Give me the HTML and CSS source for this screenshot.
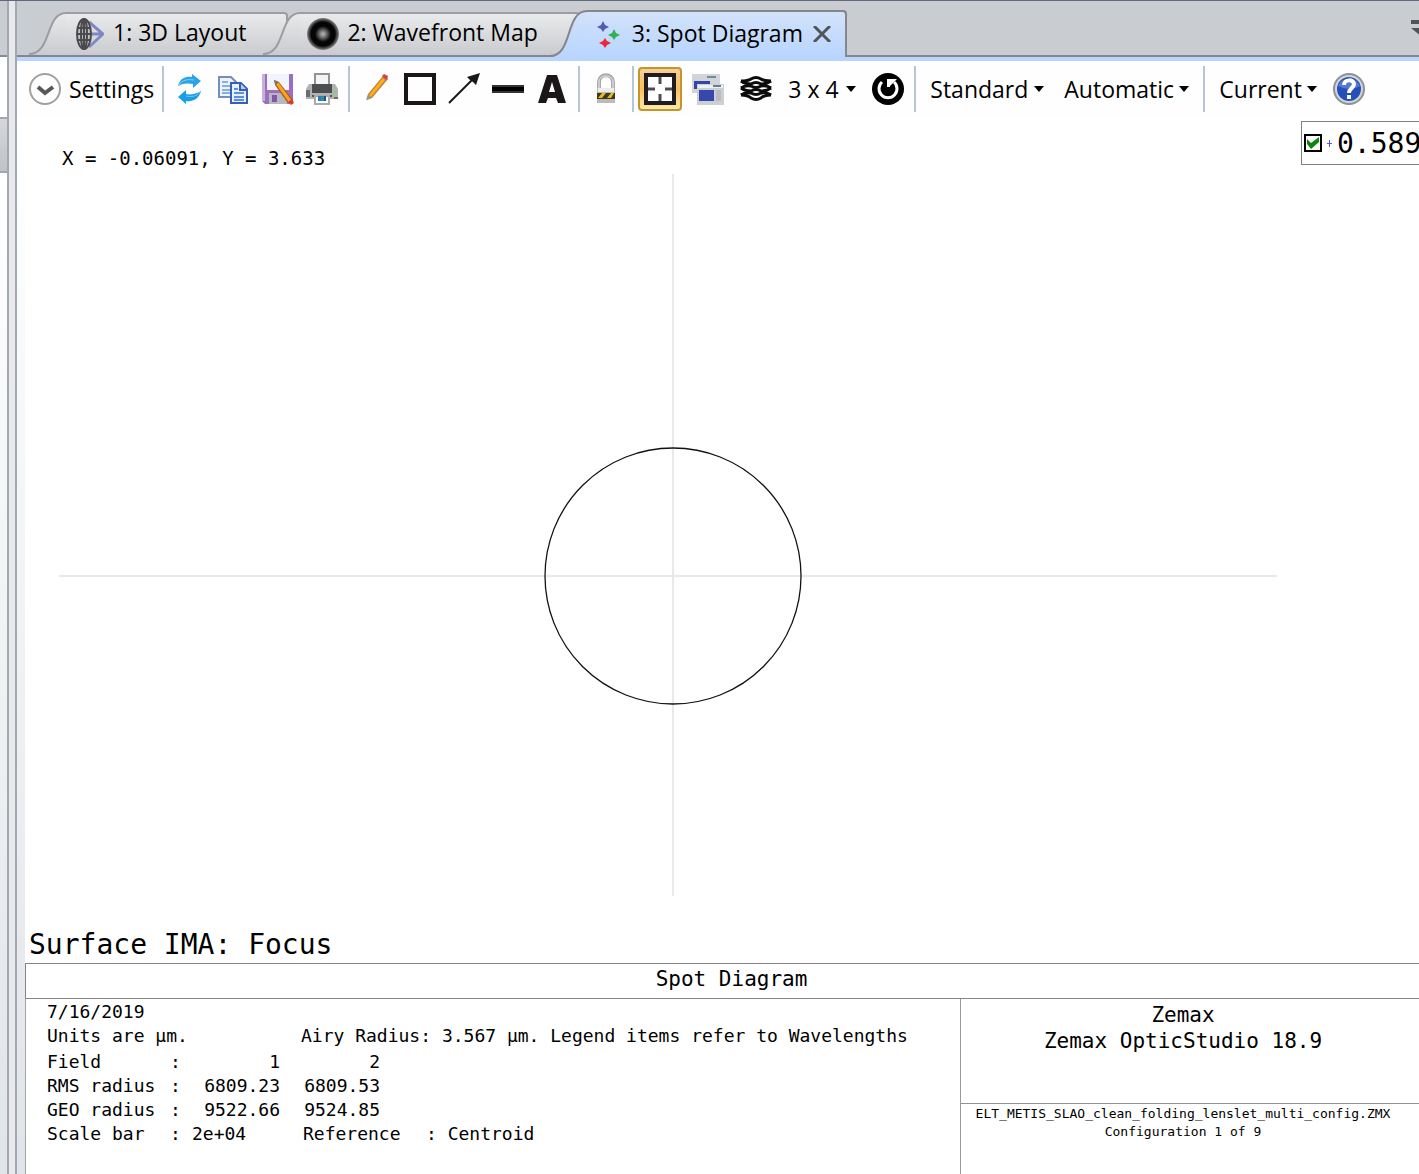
FILE: index.html
```html
<!DOCTYPE html>
<html lang="en">
<head>
<meta charset="utf-8">
<title>Spot Diagram</title>
<link rel="stylesheet" href="styles.css">
</head>
<body>
<div class="app">
  <aside class="dock">
    <div class="dock-head"></div>
    <div class="dock-gap"></div>
    <div class="dock-tab"></div>
    <div class="dock-fill"></div>
  </aside>
  <div class="splitter"></div>
  <main class="window">
    <nav class="tabs">
      <button class="tab" type="button">
        <svg class="slope" width="37" height="43" viewBox="0 0 37 43">
          <defs><linearGradient id="grey" x1="0" y1="0" x2="0" y2="43" gradientUnits="userSpaceOnUse"><stop offset="0" stop-color="#e9eaeb"/><stop offset="1" stop-color="#c9cbcf"/></linearGradient></defs>
          <path d="M0 43C23 42 16 1 37 1V43Z" fill="url(#grey)"/>
          <path d="M0 42C23 42 16 1 37 1" fill="none" stroke="#9b9da1" stroke-width="2"/>
        </svg>
        <span class="tab-body">
          <svg width="28" height="32" viewBox="0 0 28 32" fill="none" stroke="#4a4a4c" stroke-width="2">
            <path d="M13 4L27 16L13 29M14 16H26" stroke="#7f88c4" stroke-width="3"/>
            <ellipse cx="8" cy="16" rx="7" ry="15" fill="#c3c4c6"/><ellipse cx="8" cy="16" rx="3" ry="15"/><path d="M8 1V31M2 10H14M1 16H15M2 22H14"/>
          </svg>
          <span class="tab-text first">1: 3D Layout</span>
        </span>
      </button>
      <button class="tab second" type="button">
        <svg class="slope" width="37" height="43" viewBox="0 0 37 43">
          <path d="M0 43C23 42 16 1 37 1V43Z" fill="url(#grey)"/>
          <path d="M0 42C23 42 16 1 37 1" fill="none" stroke="#9b9da1" stroke-width="2"/>
        </svg>
        <span class="tab-body">
          <svg width="32" height="32" viewBox="0 0 32 32">
            <defs><radialGradient id="wave"><stop offset="0" stop-color="#bbb"/><stop offset=".2" stop-color="#777"/><stop offset=".5" stop-color="#050505"/><stop offset=".75" stop-color="#050505"/><stop offset="1" stop-color="#888"/></radialGradient></defs>
            <circle cx="16" cy="16" r="16" fill="url(#wave)"/>
          </svg>
          <span class="tab-text">2: Wavefront Map</span>
        </span>
      </button>
      <button class="tab active" type="button">
        <svg class="slope" width="37" height="47" viewBox="0 0 37 47">
          <defs><linearGradient id="blue" x1="0" y1="0" x2="0" y2="47" gradientUnits="userSpaceOnUse"><stop offset="0" stop-color="#d2e2fa"/><stop offset="1" stop-color="#b9d5ff"/></linearGradient></defs>
          <path d="M0 47C23 47 15 1 37 1V47Z" fill="url(#blue)"/>
          <path d="M0 46C23 46 15 1 37 1" fill="none" stroke="#85878d" stroke-width="2"/>
        </svg>
        <span class="tab-body">
          <svg width="24" height="28" viewBox="0 0 24 28">
            <path d="M7 1L9 5L13 7L9 9L7 12L5 9L1 7L5 5Z" fill="#525bb0"/>
            <path d="M18 9L20 13L24 15L20 17L18 20L16 17L12 15L16 13Z" fill="#30b256"/>
            <path d="M9 18L11 21L15 23L11 25L9 28L7 25L3 23L7 21Z" fill="#ed2638"/>
          </svg>
          <span class="tab-text">3: Spot Diagram</span>
          <svg class="close" width="18" height="16" viewBox="0 0 18 16"><path d="M1 0L17 16M17 0L1 16" stroke="#515459" stroke-width="3"/></svg>
        </span>
      </button>
      <button class="tab-list" type="button" aria-label="Open windows">
        <svg width="20" height="16" viewBox="0 0 20 16" fill="#505358"><path d="M0 0H20V4H0ZM0 8H20L10 16Z"/></svg>
      </button>
    </nav>

    <div class="toolbar" role="toolbar">
      <button class="settings" type="button">
        <svg width="32" height="32" viewBox="0 0 32 32" fill="none"><circle cx="16" cy="16" r="15" stroke="#a0a0a0" stroke-width="2"/><path d="M9 14L16 20L24 14" stroke="#58585a" stroke-width="4"/></svg>
        <span>Settings</span>
      </button>
      <span class="sep"></span>
      <button class="tool" type="button" aria-label="Refresh"><svg viewBox="0 0 32 32"><path d="M4 13C6 5 12 3 18 4V1L27 8L19 15V11C14 10 9 10 4 13Z" fill="#2ba3e5"/><path d="M5 12C8 7 13 6 20 7" fill="none" stroke="#7cd3f8"/><path d="M27 18C25 26 19 29 12 28V31L4 24L12 17V21C17 22 22 21 27 18Z" fill="#1b9de6"/><path d="M26 19C22 24 17 24 12 23" fill="none" stroke="#6ccaf5"/></svg></button>
      <button class="tool" type="button" aria-label="Copy"><svg viewBox="0 0 32 32"><path d="M1 4H13L18 9V24H1Z" fill="#edf3fc" stroke="#7590b8" stroke-width="2"/><path d="M4 9H10M4 13H12M4 17H12M4 20H12" stroke="#8caee0" stroke-width="2"/><path d="M13 10H23L29 16V30H13Z" fill="#e8f1ff" stroke="#375fb7" stroke-width="2"/><path d="M22 10V17H29" fill="#b6cff7" stroke="#375fb7" stroke-width="2"/><path d="M16 16H20M16 20H26M16 24H26M16 27H26" stroke="#5b8fe7" stroke-width="2"/></svg></button>
      <button class="tool" type="button" aria-label="Save"><svg viewBox="0 0 32 32"><path d="M0 1H31V31H3L0 28Z" fill="#9b6fc0"/><path d="M0 1H3V28H0Z" fill="#c9b0dc"/><path d="M5 1H27V17H5Z" fill="#f1f4fb"/><path d="M7 20H25V31H7Z" fill="#b8b6bf"/><path d="M10 22H15V29H10Z" fill="#8058a5"/><path d="M12 7L17 9L31 27L29 31L25 29L13 12Z" fill="#a75f20"/><path d="M15 10L28 28" stroke="#fba31b" stroke-width="3"/><path d="M26 29L30 26L32 30L29 32Z" fill="#df3b30"/><path d="M12 7L17 9L14 12Z" fill="#777a70"/></svg></button>
      <button class="tool" type="button" aria-label="Print"><svg viewBox="0 0 32 32"><path d="M9 1H23V14H9Z" fill="#f4f4f4" stroke="#929294" stroke-width="2"/><path d="M3 11H29L32 16V26H0V16Z" fill="#b0b2b4"/><path d="M6 11H26V20H6Z" fill="#4b4d50"/><path d="M0 17H4V24H0ZM28 24H32V26H28Z" fill="#6b6d70"/><path d="M27 18H30V20H27Z" fill="#72dc62"/><path d="M6 22H26V24H6Z" fill="#555"/><path d="M9 23H23V31H9Z" fill="#fff" stroke="#aaa" stroke-width="2"/><path d="M12 23H15V28H12Z" fill="#2b78c5"/><path d="M15 23H18V28H15Z" fill="#328f8b"/><path d="M18 23H20V28H18Z" fill="#244c9d"/></svg></button>
      <span class="sep"></span>
      <button class="tool" type="button" aria-label="Pencil"><svg viewBox="0 0 32 32"><path d="M23 3L28 6L12 25L7 27L8 21Z" fill="#b98142"/><path d="M24 6L10 23" stroke="#ffae18" stroke-width="3"/><path d="M22 3L24 1L28 3L27 7Z" fill="#d93e49"/><path d="M8 21L11 25L6 27Z" fill="#98998a"/></svg></button>
      <button class="tool" type="button" aria-label="Rectangle"><svg viewBox="0 0 32 32"><path d="M2 2H30V30H2Z" fill="none" stroke="#1b1718" stroke-width="4"/></svg></button>
      <button class="tool" type="button" aria-label="Arrow"><svg viewBox="0 0 32 32"><path d="M1 30L24 7" stroke="#1b1718" stroke-width="2"/><path d="M32 0L28 12L25 9L22 7L19 4Z" fill="#1b1718"/></svg></button>
      <button class="tool" type="button" aria-label="Line"><svg viewBox="0 0 32 32"><path d="M0 12H32V20H0Z" fill="#333"/><path d="M0 14H32V18H0Z" fill="#000"/></svg></button>
      <button class="tool" type="button" aria-label="Text"><svg viewBox="0 0 32 32"><path fill="#1b1718" fill-rule="evenodd" d="M11 2H21L30 30H22L20 25H12L10 30H2ZM16 9L13 19H19Z"/></svg></button>
      <span class="sep"></span>
      <button class="tool" type="button" aria-label="Lock"><svg viewBox="0 0 32 32"><path d="M9 17V9C9 0 23 0 23 9V17" fill="none" stroke="#aaa" stroke-width="4"/><path d="M9 17V9C9 1 23 1 23 9V17" fill="none" stroke="#eee"/><path d="M7 15H25V30H7Z" fill="#bbb"/><path d="M8 15H24V19H8Z" fill="#ececec"/><path d="M7 20H25V26H7Z" fill="#403720"/><path d="M8 25L12 20H16L12 25ZM17 25L21 20H24L21 25Z" fill="#e7b820"/></svg></button>
      <span class="sep"></span>
      <button class="tool pressed" type="button" aria-label="Fit window"><svg viewBox="0 0 32 32"><path d="M2 2H30V30H2Z" fill="#fff" stroke="#211c1e" stroke-width="4"/><path d="M16 4V11M16 21V28M4 16H11M21 16H28" stroke="#504c4d" stroke-width="3"/></svg></button>
      <span class="space"></span>
      <button class="tool" type="button" aria-label="Windows"><svg viewBox="0 0 32 32"><path d="M0 1H28V20H0Z" fill="#d1d4d9"/><path d="M2 8H18V16H2Z" fill="#3545a7"/><path d="M6 12H28V22H6Z" fill="#f6f7f8"/><path d="M15 3H24V5H15Z" fill="#70899b"/><path d="M5 11H32V32H5Z" fill="#cdd0d3"/><path d="M6 12H31V15H6Z" fill="#eef0f3"/><path d="M7 17H22V28H7Z" fill="#3648ac"/><path d="M24 17H29V28H24Z" fill="#b9bcc2"/><path d="M21 13H29" stroke="#637f92" stroke-width="2"/></svg></button>
      <span class="space"></span>
      <button class="tool" type="button" aria-label="Layers"><svg viewBox="0 0 32 32" fill="none" stroke="#0a0a0a" stroke-width="3"><path d="M1 8Q8 8 11 6Q16 3 21 6Q24 8 31 8"/><path d="M1 8Q5 11 11 11Q16 8 21 11Q27 11 31 8"/><path d="M1 15Q5 12 11 13Q16 16 21 13Q27 12 31 15"/><path d="M1 15Q5 18 11 18Q16 15 21 18Q27 18 31 15"/><path d="M1 22Q5 19 11 20Q16 23 21 20Q27 19 31 22"/><path d="M1 22Q8 22 11 25Q16 28 21 25Q24 22 31 22"/></svg></button>
      <label class="drop"><select aria-label="Grid size"><option>3 x 4</option></select><svg width="10" height="6" viewBox="0 0 10 6"><path d="M0 0H10L5 6Z"/></svg></label>
      <button class="tool" type="button" aria-label="Reset"><svg viewBox="0 0 32 32"><circle cx="16" cy="16" r="16"/><path d="M22 9A9 9 0 1 1 10 9" fill="none" stroke="#fff" stroke-width="3"/><path d="M15 6H18V14H15ZM18 6H25L18 13Z" fill="#fff"/></svg></button>
      <span class="sep"></span>
      <label class="drop wide"><select aria-label="Mode"><option>Standard</option></select><svg width="10" height="6" viewBox="0 0 10 6"><path d="M0 0H10L5 6Z"/></svg></label>
      <label class="drop wide"><select aria-label="Update"><option>Automatic</option></select><svg width="10" height="6" viewBox="0 0 10 6"><path d="M0 0H10L5 6Z"/></svg></label>
      <span class="sep"></span>
      <label class="drop wide"><select aria-label="Configuration"><option>Current</option></select><svg width="10" height="6" viewBox="0 0 10 6"><path d="M0 0H10L5 6Z"/></svg></label>
      <button class="tool" type="button" aria-label="Help"><svg viewBox="0 0 32 32"><circle cx="16" cy="16" r="16" fill="#8d9095"/><circle cx="16" cy="16" r="14" fill="#d4d5d8"/><circle cx="16" cy="16" r="12" fill="#2550b8"/><path d="M5 13A12 12 0 0 1 27 13Q16 19 5 13Z" fill="#5678d0"/><path d="M11 12C11 6 21 6 21 11C21 15 16 15 16 20" fill="none" stroke="#fff" stroke-width="4"/><path d="M14 22H18V26H14Z" fill="#fff"/></svg></button>
    </div>

    <section class="sheet">
      <div class="readout">
        <output class="coords">X = -0.06091, Y = 3.633</output>
        <label class="legend">
          <input type="checkbox" checked>
          <svg width="5" height="7" viewBox="0 0 5 7"><path d="M2 0H3V7H2ZM0 3H5V4H0Z" fill="#5555f5"/></svg>
          <span>0.589</span>
        </label>
      </div>
      <svg class="plot" viewBox="0 0 1218 722" role="img" aria-label="Spot diagram">
        <path d="M0 402H1218M614 0V722" stroke="#e9e9e9" stroke-width="2"/>
        <circle cx="614" cy="402" r="128" fill="none" stroke="#111" stroke-width="1.3"/>
      </svg>
      <h1 class="surface">Surface IMA: Focus</h1>
      <h2 class="title">Spot Diagram</h2>
      <div class="info">
        <div class="results">
          <p>7/16/2019</p>
          <p class="units"><span>Units are µm.</span><span>Airy Radius: 3.567 µm. Legend items refer to Wavelengths</span></p>
          <table>
            <colgroup><col class="c-name"><col class="c-colon"><col class="c-one"><col class="c-two"><col class="c-gap"><col></colgroup>
            <tr><th>Field</th><td>:</td><td class="num">1</td><td class="num">2</td></tr>
            <tr><th>RMS radius</th><td>:</td><td class="num">6809.23</td><td class="num">6809.53</td></tr>
            <tr><th>GEO radius</th><td>:</td><td class="num">9522.66</td><td class="num">9524.85</td></tr>
            <tr><th>Scale bar</th><td>:</td><td>2e+04</td><td class="ref" colspan="2">Reference</td><td>: Centroid</td></tr>
          </table>
        </div>
        <div class="vendor">
          <div class="product"><p>Zemax</p><p>Zemax OpticStudio 18.9</p></div>
          <div class="file"><p>ELT_METIS_SLAO_clean_folding_lenslet_multi_config.ZMX</p><p>Configuration 1 of 9</p></div>
        </div>
      </div>
    </section>
  </main>
</div>
</body>
</html>
```
FILE: styles.css
```css
* { box-sizing: border-box; }
body { margin: 0; background: #fff; color: #000; font-family: "Open Sans", "Noto Sans", sans-serif; font-size: 23px; }
button, select { font: inherit; color: inherit; background: none; border: 0; padding: 0; margin: 0; }
h1, h2, p { margin: 0; font-weight: 400; }
svg { display: block; flex: none; }

.app { display: flex; min-height: 100vh; border-top: 1px solid #5f6b7d; overflow: hidden; }

/* edge of the neighbouring pane */
.dock { flex: none; width: 7px; display: flex; flex-direction: column; }
.dock-head { height: 56px; background: #c9ccd1; border-bottom: 2px solid #8a8c91; }
.dock-gap { height: 60px; }
.dock-tab { height: 56px; background: linear-gradient(#d6d8dc, #bfc2c8); border: solid #a3a5a9; border-width: 2px 0; }
.dock-fill { flex: 1; background: linear-gradient(#fff, #e1e4e8); }
.splitter { flex: none; width: 10px; background: #e9e9eb; border: solid #a1aab2; border-width: 0 2px; }
.window { flex: 1; min-width: 0; display: flex; flex-direction: column; background: linear-gradient(#fff 10%, #e1e4e8); }

.tabs { display: flex; align-items: flex-end; height: 56px; background: #c9ccd1; border-bottom: 2px solid #85878d; padding-left: 12px; }
.tab { display: flex; flex: none; height: 43px; }
.tab-body { display: flex; align-items: center; height: 100%; padding: 0 40px 2px 10px; border: solid #9b9da1; border-width: 2px 2px 0 0; border-top-right-radius: 4px; background: linear-gradient(#e9eaeb, #c9cbcf); line-height: 28px; white-space: nowrap; }
.tab-text { margin: 0 0 4px 8px; }
.tab-text.first { margin-left: 9px; }
.second { margin-left: -25px; }
.second .tab-body { padding-left: 7px; }
.active { height: 47px; margin: 0 0 -2px -30px; }
.active .tab-body { padding: 0 14px 2px 9px; border-color: #85878d; background: linear-gradient(#d2e2fa, #b9d5ff); }
.active .tab-text { margin: 0 10px 2px 12px; }
.tab-list { align-self: flex-start; width: 8px; height: 16px; margin: 19px 0 0 auto; overflow: hidden; }

.toolbar { display: flex; align-items: center; height: 60px; border-top: 4px solid #b9d5ff; padding-left: 12px; background: #fefefe; white-space: nowrap; }
.settings { display: flex; align-items: center; gap: 8px; margin-right: 4px; }
.sep { flex: none; width: 2px; height: 46px; margin: 0 4px; background: #b5c5da; }
.space { flex: none; width: 4px; }
.tool { flex: none; display: grid; place-items: center; width: 44px; height: 44px; }
.tool svg { width: 32px; height: 32px; }
.pressed { border: 2px solid #c2962c; border-radius: 4px; background: linear-gradient(#f8cf98, #fbbd62 50%, #ffe9a8); }
.drop { display: flex; align-items: center; gap: 7px; padding: 0 10px; }
.drop.wide { gap: 5px; }
.drop select { appearance: none; }

.sheet { flex: 1; display: flex; flex-direction: column; margin-left: 8px; background: #fff; font-family: "DejaVu Sans Mono", monospace; font-size: 18px; }
.readout { display: flex; justify-content: space-between; height: 57px; padding: 4px 0 0 37px; }
.coords { padding-top: 25px; font-size: 19px; line-height: 24px; }
.legend { display: flex; align-items: center; gap: 5px; width: 118px; height: 44px; padding-left: 2px; overflow: hidden; border: 1px solid #7f7f7f; border-right: 0; font-size: 28px; }
.legend input { appearance: none; flex: none; width: 18px; height: 18px; margin: 0; border: 2px solid #000; background: #fff; }
.legend input:checked { background: #fff url("data:image/svg+xml,%3Csvg xmlns='http://www.w3.org/2000/svg' viewBox='0 0 14 14'%3E%3Cpath d='M1 3L5 7L13 1V6L5 13L1 8Z' fill='%230c860c'/%3E%3C/svg%3E") center / 14px 14px no-repeat; }
.plot { flex: 1; width: calc(100% - 176px); min-height: 300px; margin-left: 34px; }
.surface { margin-top: 31px; padding-left: 4px; font-size: 28px; line-height: 36px; }
.title { height: 36px; padding-left: 18px; border: 1px solid #858585; border-right: 0; font-size: 21px; line-height: 30px; text-align: center; }
.info { display: flex; min-height: 175px; border-left: 1px solid #a5a5a5; }
.results { flex: 1; padding: 1px 0 0 21px; line-height: 24px; white-space: nowrap; }
.units { display: flex; }
.units span:first-child { width: 254px; }
table { width: 100%; margin-top: 2px; table-layout: fixed; border-collapse: collapse; }
th, td { padding: 0; font-weight: 400; text-align: left; }
.c-name { width: 123px; }
.c-colon { width: 22px; }
.c-one { width: 88px; }
.c-two { width: 100px; }
.c-gap { width: 46px; }
.num { text-align: right; }
td.ref { padding-left: 23px; }
.vendor { width: 459px; border-left: 1px solid #9a9a9a; text-align: center; }
.product { height: 105px; padding: 3px 14px 0 0; border-bottom: 1px solid #929292; font-size: 21px; line-height: 26px; }
.file { padding: 1px 14px 0 0; font-size: 13px; line-height: 18px; }
```
